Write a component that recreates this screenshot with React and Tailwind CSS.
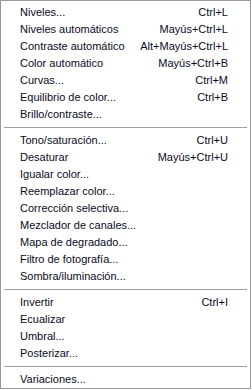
import React from "react";

const groups = [
  [
    ["Niveles...", "Ctrl+L"],
    ["Niveles automáticos", "Mayús+Ctrl+L"],
    ["Contraste automático", "Alt+Mayús+Ctrl+L"],
    ["Color automático", "Mayús+Ctrl+B"],
    ["Curvas...", "Ctrl+M"],
    ["Equilibrio de color...", "Ctrl+B"],
    ["Brillo/contraste...", ""],
  ],
  [
    ["Tono/saturación...", "Ctrl+U"],
    ["Desaturar", "Mayús+Ctrl+U"],
    ["Igualar color...", ""],
    ["Reemplazar color...", ""],
    ["Corrección selectiva...", ""],
    ["Mezclador de canales...", ""],
    ["Mapa de degradado...", ""],
    ["Filtro de fotografía...", ""],
    ["Sombra/iluminación...", ""],
  ],
  [
    ["Invertir", "Ctrl+I"],
    ["Ecualizar", ""],
    ["Umbral...", ""],
    ["Posterizar...", ""],
  ],
  [["Variaciones...", ""]],
];

const MenuRow = ({ label, shortcut }) => (
  <div className="flex h-[17px] items-center justify-between whitespace-nowrap pl-[19px] pr-[22px]">
    <span>{label}</span>
    {shortcut && <span>{shortcut}</span>}
  </div>
);

const App = () => {
  return (
    <div className="h-[390px] w-[252px] bg-white">
      <div
        className="flex h-[389px] w-[251px] flex-col border border-[#999999] bg-white pt-[3px] text-[11px] leading-none text-[#0a0a1e]"
        style={{ fontFamily: "Tahoma, 'Liberation Sans', Arial, sans-serif" }}
      >
        {groups.map((group, gi) => (
          <div key={gi}>
            {gi > 0 && (
              <div className="flex h-[9px] items-center px-[3px]">
                <div className="h-px w-full bg-[#a0a0a0]" />
              </div>
            )}
            {group.map(([label, shortcut]) => (
              <MenuRow key={label} label={label} shortcut={shortcut} />
            ))}
          </div>
        ))}
      </div>
    </div>
  );
};

export default App;
